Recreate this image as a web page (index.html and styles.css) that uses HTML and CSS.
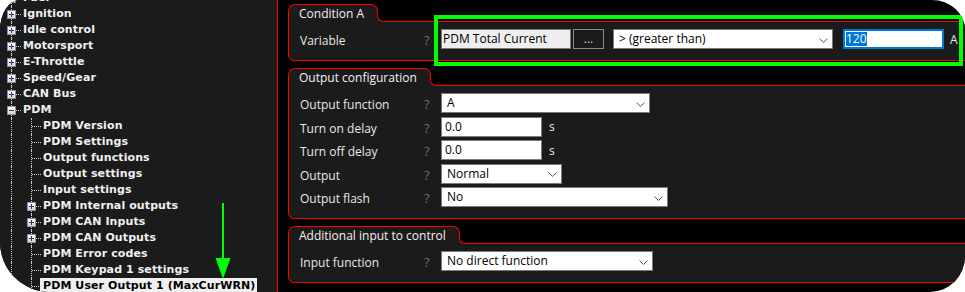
FILE: index.html
```html
<!DOCTYPE html>
<html>
<head>
<meta charset="utf-8">
<link rel="stylesheet" href="styles.css">
</head>
<body>
<div class="frame">
  <nav class="tree">
    <div class="tree-list">
      <div class="row"><span class="cell v h"><i class="exp plus"></i></span><span class="label">Fuel</span></div>
      <div class="row"><span class="cell v h"><i class="exp plus"></i></span><span class="label">Ignition</span></div>
      <div class="row"><span class="cell v h"><i class="exp plus"></i></span><span class="label">Idle control</span></div>
      <div class="row"><span class="cell v h"><i class="exp plus"></i></span><span class="label">Motorsport</span></div>
      <div class="row"><span class="cell v h"><i class="exp plus"></i></span><span class="label">E-Throttle</span></div>
      <div class="row"><span class="cell v h"><i class="exp plus"></i></span><span class="label">Speed/Gear</span></div>
      <div class="row"><span class="cell v h"><i class="exp plus"></i></span><span class="label">CAN Bus</span></div>
      <div class="row"><span class="cell v h"><i class="exp"></i></span><span class="label">PDM</span></div>
      <div class="row"><span class="cell v"></span><span class="cell v h"></span><span class="label">PDM Version</span></div>
      <div class="row"><span class="cell v"></span><span class="cell v h"></span><span class="label">PDM Settings</span></div>
      <div class="row"><span class="cell v"></span><span class="cell v h"></span><span class="label">Output functions</span></div>
      <div class="row"><span class="cell v"></span><span class="cell v h"></span><span class="label">Output settings</span></div>
      <div class="row"><span class="cell v"></span><span class="cell v h"></span><span class="label">Input settings</span></div>
      <div class="row"><span class="cell v"></span><span class="cell v h"><i class="exp plus"></i></span><span class="label">PDM Internal outputs</span></div>
      <div class="row"><span class="cell v"></span><span class="cell v h"><i class="exp plus"></i></span><span class="label">PDM CAN Inputs</span></div>
      <div class="row"><span class="cell v"></span><span class="cell v h"><i class="exp plus"></i></span><span class="label">PDM CAN Outputs</span></div>
      <div class="row"><span class="cell v"></span><span class="cell v h"></span><span class="label">PDM Error codes</span></div>
      <div class="row"><span class="cell v"></span><span class="cell v h"></span><span class="label">PDM Keypad 1 settings</span></div>
      <div class="row"><span class="cell v"></span><span class="cell v h"></span><span class="label selected">PDM User Output 1 (MaxCurWRN)</span></div>
    </div>
  </nav>

  <main class="main">
    <section class="group">
      <div class="tab">Condition A</div>
      <div class="body">
        <div class="field">
          <span class="lbl">Variable</span><span class="help">?</span>
          <div class="controls">
            <span class="input ro w130">PDM Total Current</span>
            <span class="btn">...</span>
            <span class="select w220 gap-sel"><span>&gt; (greater than)</span><svg width="9" height="5" viewBox="0 0 9 5"><polyline points="0.5,0.5 4.5,4.5 8.5,0.5" fill="none" stroke="#5a5a5a" stroke-width="1"/></svg></span>
            <span class="input focus w101 gap-val"><span class="sel">120</span></span>
            <span class="unit gap-unit">A</span>
          </div>
        </div>
      </div>
    </section>

    <section class="group">
      <div class="tab">Output configuration</div>
      <div class="body">
        <div class="field">
          <span class="lbl">Output function</span><span class="help">?</span>
          <div class="controls">
            <span class="select w209"><span>A</span><svg width="9" height="5" viewBox="0 0 9 5"><polyline points="0.5,0.5 4.5,4.5 8.5,0.5" fill="none" stroke="#5a5a5a" stroke-width="1"/></svg></span>
          </div>
        </div>
        <div class="field">
          <span class="lbl">Turn on delay</span><span class="help">?</span>
          <div class="controls">
            <span class="input w101">0.0</span><span class="unit">s</span>
          </div>
        </div>
        <div class="field">
          <span class="lbl">Turn off delay</span><span class="help">?</span>
          <div class="controls">
            <span class="input w101">0.0</span><span class="unit">s</span>
          </div>
        </div>
        <div class="field">
          <span class="lbl">Output</span><span class="help">?</span>
          <div class="controls">
            <span class="select w121"><span>Normal</span><svg width="9" height="5" viewBox="0 0 9 5"><polyline points="0.5,0.5 4.5,4.5 8.5,0.5" fill="none" stroke="#5a5a5a" stroke-width="1"/></svg></span>
          </div>
        </div>
        <div class="field">
          <span class="lbl">Output flash</span><span class="help">?</span>
          <div class="controls">
            <span class="select w227"><span>No</span><svg width="9" height="5" viewBox="0 0 9 5"><polyline points="0.5,0.5 4.5,4.5 8.5,0.5" fill="none" stroke="#5a5a5a" stroke-width="1"/></svg></span>
          </div>
        </div>
      </div>
    </section>

    <section class="group">
      <div class="tab">Additional input to control</div>
      <div class="body">
        <div class="field">
          <span class="lbl">Input function</span><span class="help">?</span>
          <div class="controls">
            <span class="select w212"><span>No direct function</span><svg width="9" height="5" viewBox="0 0 9 5"><polyline points="0.5,0.5 4.5,4.5 8.5,0.5" fill="none" stroke="#5a5a5a" stroke-width="1"/></svg></span>
          </div>
        </div>
      </div>
    </section>
  </main>

  <div class="callout"></div>
  <svg class="arrow" width="16" height="78" viewBox="0 0 16 78">
    <rect x="7" y="1" width="2" height="57" fill="#00ff00"/>
    <polygon points="0.5,56 15.5,56 8,77" fill="#00ff00"/>
  </svg>
</div>
</body>
</html>
```

FILE: styles.css
```css
html, body {
  margin: 0;
  padding: 0;
  background: #ffffff;
}

.frame {
  position: relative;
  width: 965px;
  height: 292px;
  overflow: hidden;
  display: flex;
  background: #000;
  border-radius: 20px 33px 35px 50px / 30px 30px 36px 50px;
  font-family: "Open Sans", "Noto Sans", sans-serif;
}

/* ---------- tree ---------- */
.tree {
  width: 278px;
  box-sizing: border-box;
  flex: none;
  background: #1b1b1b;
  border-right: 1px solid #ff0000;
  padding-left: 1px;
  overflow: hidden;
}

.tree-list {
  margin-top: -10px;
}

.row {
  display: flex;
  height: 16px;
  font: bold 11px/16px "DejaVu Sans", sans-serif;
  letter-spacing: 0.1px;
  color: #f0f0f0;
  white-space: nowrap;
}

.cell {
  position: relative;
  width: 20px;
  flex: none;
}

.cell.v::before {
  content: "";
  position: absolute;
  left: 10px;
  top: 0;
  bottom: 0;
  border-left: 1px dotted #cfcfcf;
}

.cell.h::after {
  content: "";
  position: absolute;
  left: 11px;
  width: 9px;
  top: 8px;
  border-top: 1px dotted #cfcfcf;
}

.exp {
  position: absolute;
  left: 6px;
  top: 4px;
  width: 9px;
  height: 9px;
  box-sizing: border-box;
  border: 1px solid #8f8f8f;
  background: linear-gradient(#ffffff, #d6d6d6);
  z-index: 1;
}

.exp::before {
  content: "";
  position: absolute;
  left: 1px;
  top: 3px;
  width: 5px;
  height: 1px;
  background: #1d3a86;
}

.exp.plus::after {
  content: "";
  position: absolute;
  left: 3px;
  top: 1px;
  width: 1px;
  height: 5px;
  background: #1d3a86;
}

.label {
  padding: 0 2px;
}

.label.selected {
  background: #f0f0f0;
  color: #000;
  margin-left: -1px;
  padding-left: 3px;
}

/* ---------- main ---------- */
.main {
  flex: 1;
  min-width: 0;
  padding: 4px 0 0 10px;
  overflow: hidden;
}

.group {
  display: flex;
  flex-direction: column;
  align-items: flex-start;
  margin-right: -30px;
}

.group + .group {
  margin-top: 7px;
}

.tab {
  position: relative;
  z-index: 1;
  height: 16px;
  padding: 1px 13px 0 10px;
  margin-bottom: -1px;
  border: 1px solid #ff0000;
  border-bottom: 0;
  border-radius: 7px 7px 0 0;
  background: #1b1b1b;
  color: #f2f2f2;
  font-size: 12px;
  line-height: 16px;
  white-space: nowrap;
}

.tab::before,
.tab::after {
  content: "";
  position: absolute;
  left: 100%;
  bottom: 0;
  width: 6px;
  height: 6px;
}

.tab::before {
  background: #1b1b1b;
}

.tab::after {
  box-sizing: border-box;
  background: #000;
  border-left: 1px solid #ff0000;
  border-bottom: 1px solid #ff0000;
  border-bottom-left-radius: 6px;
}

.body {
  align-self: stretch;
  display: flex;
  flex-direction: column;
  gap: 3.5px;
  padding: 7px 0 11px 11px;
  border: 1px solid #ff0000;
  border-radius: 0 0 0 6px;
  background: #1b1b1b;
}

.field {
  display: grid;
  grid-template-columns: 120px 21px 1fr;
  align-items: center;
  height: 20px;
  font-size: 12px;
}

.lbl {
  color: #e8e8e8;
  padding-top: 3px;
  white-space: nowrap;
}

.help {
  color: #6f6f6f;
  font-size: 13px;
  padding-left: 4px;
  padding-top: 2px;
}

.controls {
  display: flex;
  align-items: center;
  white-space: nowrap;
}

.input,
.select,
.btn {
  height: 20px;
  box-sizing: border-box;
  border: 1px solid #7a7a7a;
  font-size: 12px;
  line-height: 18px;
  white-space: nowrap;
  overflow: hidden;
}

.input {
  background: #fff;
  color: #000;
  padding: 0 3px;
}

.input.ro {
  background: #efefef;
  padding-left: 1px;
}

.input.focus {
  border-color: #0078d7;
  box-shadow: inset 0 0 0 1px #0078d7;
  padding-left: 2px;
}

.sel {
  display: inline-block;
  line-height: 14px;
  background: #0078d7;
  color: #fff;
}

.btn {
  width: 31px;
  margin-left: 2px;
  background: #1b1b1b;
  border-color: #8a8a8a;
  color: #cfcfcf;
  text-align: center;
}

.select {
  display: flex;
  align-items: center;
  justify-content: space-between;
  padding: 0 4px 0 5px;
  background: #fff;
  color: #000;
}

.select svg {
  flex: none;
  margin-top: 2px;
}

.unit {
  color: #e8e8e8;
  margin-left: 7px;
}

.gap-sel { margin-left: 9px; }
.gap-val { margin-left: 10px; }
.gap-unit { margin-left: 6px; }

.w101 { width: 101px; }
.w121 { width: 121px; }
.w130 { width: 130px; }
.w209 { width: 209px; }
.w212 { width: 212px; }
.w220 { width: 220px; }
.w227 { width: 227px; }

/* ---------- annotations ---------- */
.callout {
  position: absolute;
  left: 434px;
  top: 15px;
  width: 529px;
  height: 51px;
  box-sizing: border-box;
  border: 4px solid #00ff00;
}

.arrow {
  position: absolute;
  left: 215px;
  top: 202px;
}
```
